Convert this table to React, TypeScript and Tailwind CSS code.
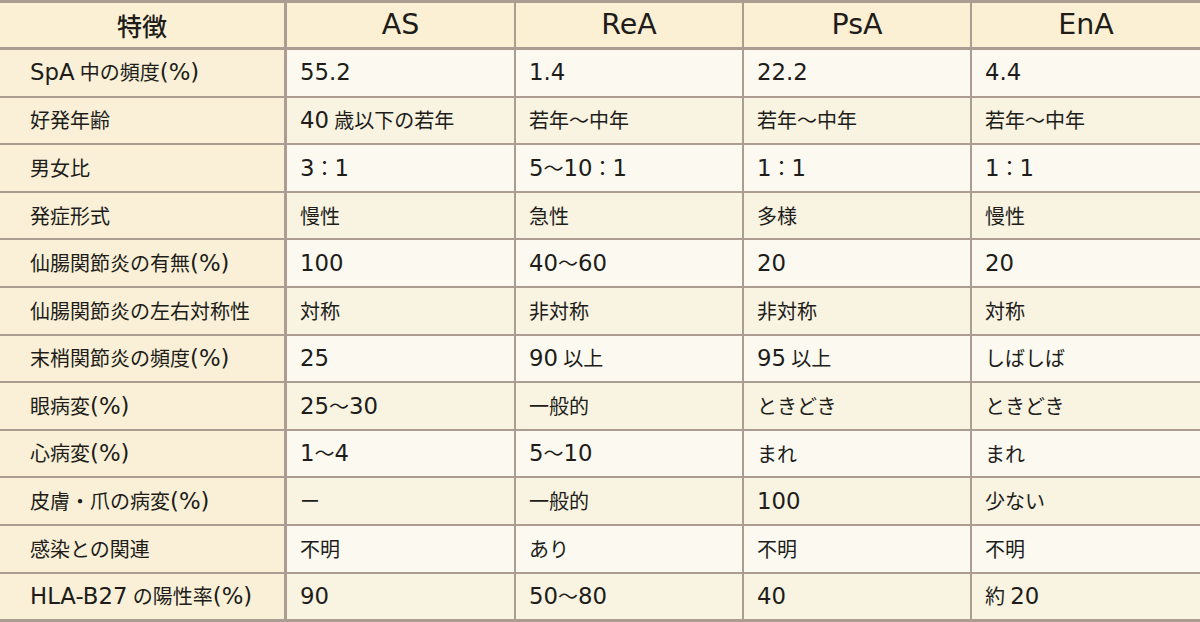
const header = ["特徴", "AS", "ReA", "PsA", "EnA"];

const rows: string[][] = [
  ["SpA 中の頻度(%)", "55.2", "1.4", "22.2", "4.4"],
  ["好発年齢", "40 歳以下の若年", "若年〜中年", "若年〜中年", "若年〜中年"],
  ["男女比", "3：1", "5〜10：1", "1：1", "1：1"],
  ["発症形式", "慢性", "急性", "多様", "慢性"],
  ["仙腸関節炎の有無(%)", "100", "40〜60", "20", "20"],
  ["仙腸関節炎の左右対称性", "対称", "非対称", "非対称", "対称"],
  ["末梢関節炎の頻度(%)", "25", "90 以上", "95 以上", "しばしば"],
  ["眼病変(%)", "25〜30", "一般的", "ときどき", "ときどき"],
  ["心病変(%)", "1〜4", "5〜10", "まれ", "まれ"],
  ["皮膚・爪の病変(%)", "ー", "一般的", "100", "少ない"],
  ["感染との関連", "不明", "あり", "不明", "不明"],
  ["HLA-B27 の陽性率(%)", "90", "50〜80", "40", "約 20"],
];

const widths = ["w-[284px]", "w-[230px]", "w-[228px]", "w-[228px]", "w-[230px]"];
const leftBorder = ["", "border-l-[3px]", "border-l-2", "border-l-2", "border-l-2"];

// latin runs get a wider, taller face than the CJK text around them
function Mixed({ text }: { text: string }) {
  const parts = text.split(/([\x20-\x7E]+)/).filter(Boolean);
  return (
    <span className="whitespace-pre">
      {parts.map((p, i) =>
        /^[\x20-\x7E]+$/.test(p) ? (
          <span
            key={i}
            className="text-[1.14em] [word-spacing:-2px] [font-family:'DejaVu_Sans',sans-serif]"
          >
            {p}
          </span>
        ) : (
          <span key={i}>{p}</span>
        )
      )}
    </span>
  );
}

export default function App() {
  return (
    <div
      className="w-[1200px] h-[622px] overflow-hidden bg-[#fcf9f1] text-[#201c19]"
      style={{ fontFamily: '"Noto Sans CJK JP", "Noto Sans", sans-serif' }}
    >
      <div className="flex h-[50px] border-t-[3px] border-b-[3px] border-[#ab9d91] bg-[#fbf0d4]">
        {header.map((h, i) => (
          <div
            key={i}
            className={`${widths[i]} ${leftBorder[i]} border-[#ab9d91] flex items-center justify-center text-[25px] font-medium leading-none`}
          >
            <Mixed text={h} />
          </div>
        ))}
      </div>
      {rows.map((r, ri) => (
        <div
          key={ri}
          className={`flex ${ri === 0 ? "h-[45.6px]" : "h-[47.6px] border-t-2"} ${
            ri === rows.length - 1 ? "h-[50.6px] border-b-[3px]" : ""
          } border-[#ab9d91] ${ri % 2 === 0 ? "bg-[#fcf9f1]" : "bg-[#f9f3e1]"}`}
        >
          {r.map((c, ci) => (
            <div
              key={ci}
              className={`${widths[ci]} ${leftBorder[ci]} border-[#ab9d91] flex items-center text-[20px] leading-none ${
                ci === 0 ? "pl-[30px] bg-[#faf0d8]" : "pl-[13px]"
              }`}
            >
              <Mixed text={c} />
            </div>
          ))}
        </div>
      ))}
    </div>
  );
}
